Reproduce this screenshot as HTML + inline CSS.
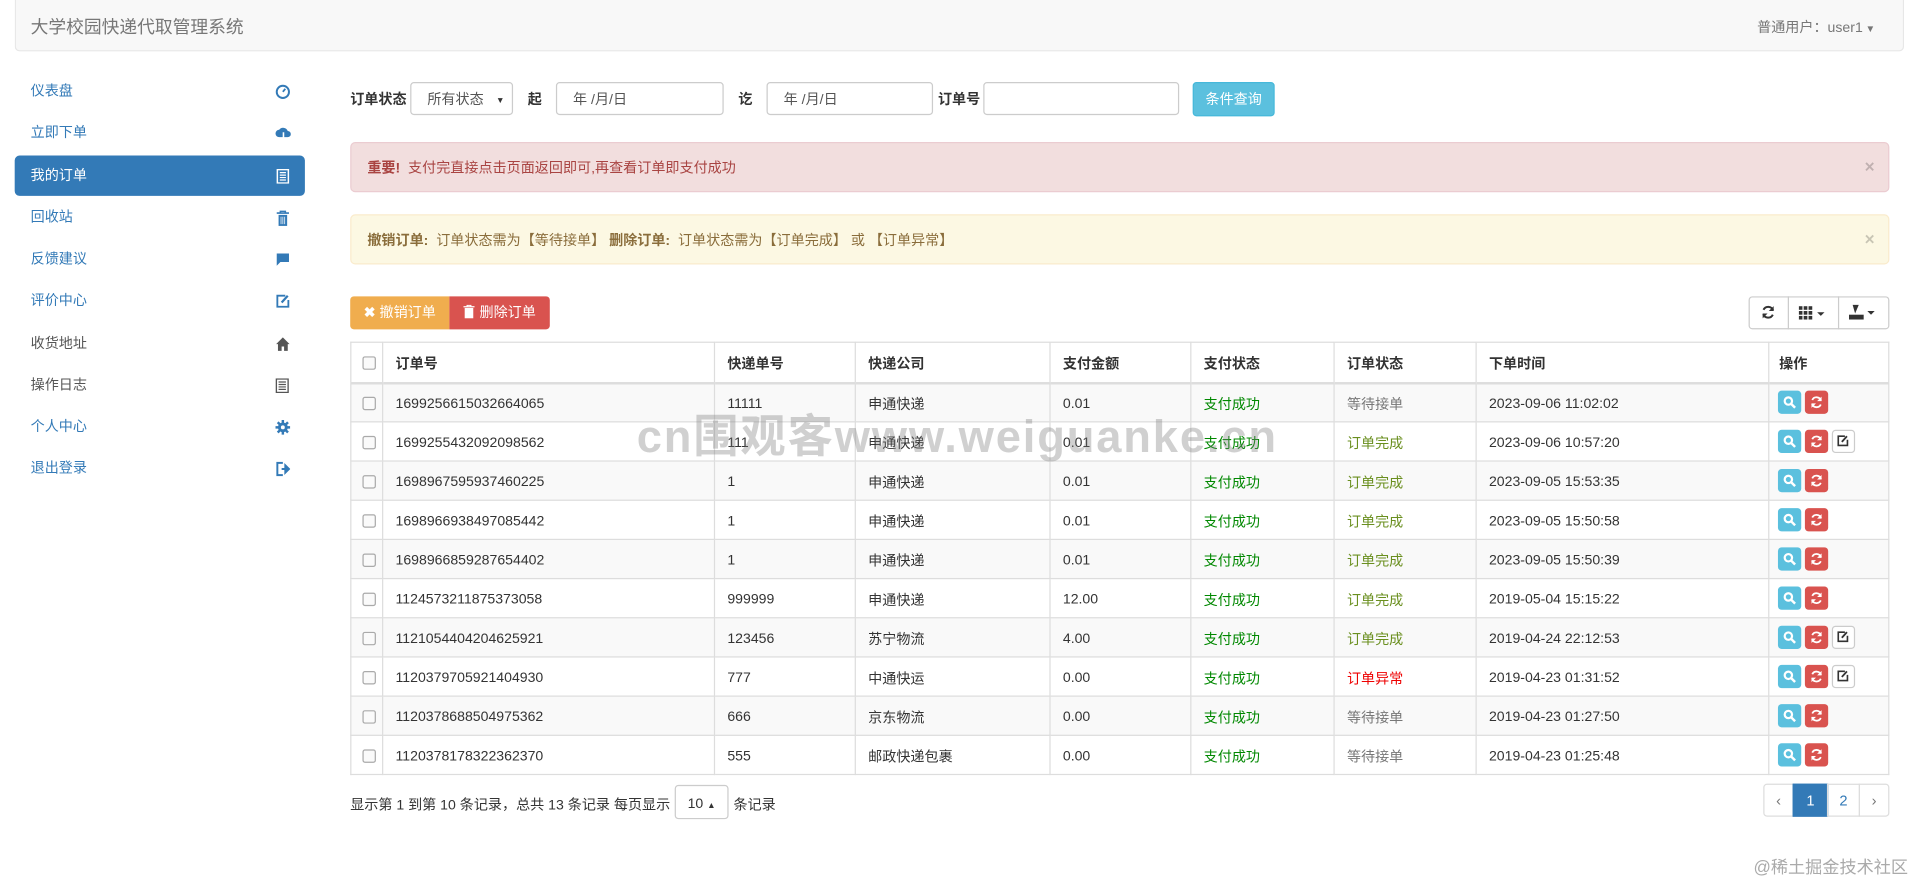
<!DOCTYPE html>
<html><head><meta charset="utf-8">
<style>
*{box-sizing:border-box;margin:0;padding:0}
html,body{width:1920px;height:883px;overflow:hidden;background:#fff}
body{font-family:"Liberation Sans","Noto Sans CJK SC",sans-serif;color:#333;font-size:11.5px}
#w{position:absolute;left:0;top:0;width:1568px;height:721px;transform:scale(1.22449);transform-origin:0 0}
.a{position:absolute}
.nav{left:12px;top:0;width:1543px;height:42px;background:#f8f8f8;border:1px solid #e7e7e7;border-top:none;border-radius:0 0 4px 4px}
.brand{left:25px;top:11px;font-size:14.5px;color:#777}
.user{left:1435px;top:14px;font-size:11.5px;color:#777}
.side{left:12px;width:237px;height:33px;border-radius:4px;color:#337ab7;font-size:11.5px;line-height:35px;padding-left:13px}
.side.act{background:#337ab7;color:#fff}
.side svg{position:absolute;left:213px;top:11px}
.inp{border:1px solid #ccc;border-radius:3px;height:27px;top:67px;background:#fff;font-size:11.5px;color:#555;line-height:29px;padding-left:13px}
.lbl{top:73px;font-weight:bold;font-size:11.5px}
.alert{left:286px;width:1257px;height:41px;border:1px solid;border-radius:4px;line-height:43px;padding-left:13px;font-size:11.5px}
.alert .x{position:absolute;right:11px;top:0;color:#000;opacity:.2;font-weight:bold;font-size:14px;line-height:39px}
.btn{height:27px;top:242px;color:#fff;line-height:29px;text-align:center;font-size:11.5px}
table{position:absolute;left:286px;top:279px;width:1257px;border-collapse:collapse;border:1px solid #ddd;font-size:11.5px}
td,th{border:1px solid #ddd;height:32px;padding:2px 0 0 10px;text-align:left;vertical-align:middle}
th{height:33px;font-weight:bold;border-bottom:2px solid #ddd}
tbody tr:nth-child(odd){background:#f9f9f9}
.cb{display:inline-block;width:11px;height:11px;border:1px solid #aaa;border-radius:2px;background:#fafafa;vertical-align:middle;margin-left:-1px}
.g{color:#080}.o{color:#6a8f1f}.gr{color:#777}.r{color:#e00}
.ib{display:inline-block;width:19px;height:19px;border-radius:3px;vertical-align:middle;margin-right:3px;position:relative}
.ib svg{position:absolute;left:4px;top:4px}
.s{background:#5bc0de}.d{background:#d9534f}.e{background:#fff;border:1px solid #ccc}
.pg{top:640px;height:27px;border:1px solid #ddd;line-height:27px;text-align:center;color:#337ab7;font-size:12px}
</style></head><body><div id="w">
<div class="a nav"></div>
<div class="a brand">大学校园快递代取管理系统</div>
<div class="a user">普通用户：user1<span style="font-size:8px"> ▼</span></div>

<div class="a side" style="top:58px">仪表盘<svg width="12" height="12" viewBox="0 0 12 12"><circle cx="6" cy="6" r="5" fill="none" stroke="#337ab7" stroke-width="1.6"/><path d="M6 6L8 3.5" stroke="#337ab7" stroke-width="1.5"/></svg></div>
<div class="a side" style="top:92px">立即下单<svg width="13" height="13" viewBox="0 0 13 13"><path d="M3 9a3 3 0 0 1 0-6 4 4 0 0 1 7 1 2.5 2.5 0 0 1 0 5z" fill="#337ab7"/><path d="M6.5 5v7M4.5 10l2 2 2-2" stroke="#fff" stroke-width="1.3" fill="none"/></svg></div>
<div class="a side act" style="top:127px">我的订单<svg width="12" height="12" viewBox="0 0 12 12"><rect x="1.5" y="0.5" width="9" height="11" fill="none" stroke="#fff" stroke-width="1.2"/><path d="M3.5 3h5M3.5 5h5M3.5 7h5M3.5 9h5" stroke="#fff"/></svg></div>
<div class="a side" style="top:161px">回收站<svg width="12" height="13" viewBox="0 0 12 13"><path d="M1 2h10M4 2V0.5h4V2" stroke="#337ab7" stroke-width="1.3" fill="none"/><rect x="2.5" y="3.5" width="7" height="9" fill="#337ab7"/><path d="M4.5 5v6M6 5v6M7.5 5v6" stroke="#fff" stroke-width=".6"/></svg></div>
<div class="a side" style="top:195px">反馈建议<svg width="12" height="12" viewBox="0 0 12 12"><path d="M1 1h10v7H4l-3 3z" fill="#337ab7"/></svg></div>
<div class="a side" style="top:229px">评价中心<svg width="12" height="12" viewBox="0 0 12 12"><path d="M8 1.5H1.5v9h9V5" fill="none" stroke="#337ab7" stroke-width="1.5"/><path d="M5 7l5-5.5" stroke="#337ab7" stroke-width="1.8"/></svg></div>
<div class="a side" style="top:264px;color:#555">收货地址<svg width="12" height="12" viewBox="0 0 12 12"><path d="M6 0.5L0.5 6H2v5.5h3V8h2v3.5h3V6h1.5z" fill="#555"/></svg></div>
<div class="a side" style="top:298px;color:#555">操作日志<svg width="11" height="12" viewBox="0 0 11 12"><rect x="0.7" y="0.5" width="9.6" height="11" fill="none" stroke="#555" stroke-width="1.1"/><path d="M2.5 3h6M2.5 5h6M2.5 7h6M2.5 9h6" stroke="#555"/></svg></div>
<div class="a side" style="top:332px">个人中心<svg width="12" height="12" viewBox="0 0 12 12"><circle cx="6" cy="6" r="4" fill="#337ab7"/><path d="M6 0v12M0 6h12M1.8 1.8l8.4 8.4M10.2 1.8l-8.4 8.4" stroke="#337ab7" stroke-width="2"/><circle cx="6" cy="6" r="1.6" fill="#fff"/></svg></div>
<div class="a side" style="top:366px">退出登录<svg width="12" height="12" viewBox="0 0 12 12"><path d="M6 1H1.5v10H6" fill="none" stroke="#337ab7" stroke-width="1.6"/><path d="M5 6h4M8 3l3 3-3 3z" stroke="#337ab7" stroke-width="1.6" fill="#337ab7"/></svg></div>

<div class="a lbl" style="left:286px">订单状态</div>
<div class="a inp" style="left:335px;width:84px">所有状态<span style="position:absolute;right:6px;font-size:7px;color:#333">▼</span></div>
<div class="a lbl" style="left:431px">起</div>
<div class="a inp" style="left:454px;width:137px">年 /月/日</div>
<div class="a lbl" style="left:603px">讫</div>
<div class="a inp" style="left:626px;width:136px">年 /月/日</div>
<div class="a lbl" style="left:766px">订单号</div>
<div class="a inp" style="left:803px;width:160px"></div>
<div class="a" style="left:974px;top:67px;width:67px;height:28px;background:#5bc0de;border:1px solid #46b8da;border-radius:3px;color:#fff;text-align:center;line-height:28px">条件查询</div>

<div class="a alert" style="top:116px;background:#f2dede;border-color:#ebccd1;color:#a94442"><b>重要!</b>&nbsp; 支付完直接点击页面返回即可,再查看订单即支付成功<span class="x">×</span></div>
<div class="a alert" style="top:175px;background:#fcf8e3;border-color:#faebcc;color:#8a6d3b"><b>撤销订单:</b>&nbsp; 订单状态需为【等待接单】 <b>删除订单:</b>&nbsp; 订单状态需为【订单完成】 或 【订单异常】<span class="x">×</span></div>

<div class="a btn" style="left:286px;width:81px;background:#f0ad4e;border-radius:3px 0 0 3px"><b>✖</b> 撤销订单</div>
<div class="a btn" style="left:367px;width:82px;background:#d9534f;border-radius:0 3px 3px 0"><svg width="10" height="11" viewBox="0 0 10 11" style="vertical-align:-1px"><path d="M0.5 1.5h9M3.5 1.5V0.3h3v1.2" stroke="#fff" fill="none"/><rect x="1.5" y="2.5" width="7" height="8.5" fill="#fff"/></svg> 删除订单</div>
<div class="a" style="left:1428px;top:242px;width:115px;height:27px;border:1px solid #ccc;border-radius:3px"></div>
<div class="a" style="left:1460px;top:242px;width:1px;height:27px;background:#ccc"></div>
<div class="a" style="left:1501px;top:242px;width:1px;height:27px;background:#ccc"></div>
<svg class="a" style="left:1438px;top:249px" width="12" height="12" viewBox="0 0 12 12"><path d="M10 4.5A4.2 4.2 0 0 0 2.2 4M2 7.5A4.2 4.2 0 0 0 9.8 8" fill="none" stroke="#333" stroke-width="1.6"/><path d="M10.5 1v4h-4zM1.5 11V7h4z" fill="#333"/></svg>
<svg class="a" style="left:1469px;top:250px" width="22" height="11" viewBox="0 0 22 11"><g fill="#333"><rect x="0" y="0" width="3" height="3"/><rect x="4" y="0" width="3" height="3"/><rect x="8" y="0" width="3" height="3"/><rect x="0" y="4" width="3" height="3"/><rect x="4" y="4" width="3" height="3"/><rect x="8" y="4" width="3" height="3"/><rect x="0" y="8" width="3" height="3"/><rect x="4" y="8" width="3" height="3"/><rect x="8" y="8" width="3" height="3"/><path d="M15 5h6l-3 3z"/></g></svg>
<svg class="a" style="left:1510px;top:248px" width="24" height="13" viewBox="0 0 24 13"><g fill="#333"><rect x="0" y="9" width="12" height="4"/><path d="M3 1h5L5 8z"/><path d="M15 6h6l-3 3z"/></g></svg>

<table>
<thead><tr><th style="width:26px"><span class="cb"></span></th><th style="width:271px">订单号</th><th style="width:115px">快递单号</th><th style="width:159px">快递公司</th><th style="width:115px">支付金额</th><th style="width:117px">支付状态</th><th style="width:116px">订单状态</th><th style="width:239px">下单时间</th><th style="padding-left:8px">操作</th></tr></thead>
<tbody>
<tr><td><span class="cb"></span></td><td>1699256615032664065</td><td>11111</td><td>申通快递</td><td>0.01</td><td class="g">支付成功</td><td class="gr">等待接单</td><td>2023-09-06 11:02:02</td><td style="padding-left:7px">S</td></tr>
<tr><td><span class="cb"></span></td><td>1699255432092098562</td><td>111</td><td>申通快递</td><td>0.01</td><td class="g">支付成功</td><td class="o">订单完成</td><td>2023-09-06 10:57:20</td><td style="padding-left:7px">SE</td></tr>
<tr><td><span class="cb"></span></td><td>1698967595937460225</td><td>1</td><td>申通快递</td><td>0.01</td><td class="g">支付成功</td><td class="o">订单完成</td><td>2023-09-05 15:53:35</td><td style="padding-left:7px">S</td></tr>
<tr><td><span class="cb"></span></td><td>1698966938497085442</td><td>1</td><td>申通快递</td><td>0.01</td><td class="g">支付成功</td><td class="o">订单完成</td><td>2023-09-05 15:50:58</td><td style="padding-left:7px">S</td></tr>
<tr><td><span class="cb"></span></td><td>1698966859287654402</td><td>1</td><td>申通快递</td><td>0.01</td><td class="g">支付成功</td><td class="o">订单完成</td><td>2023-09-05 15:50:39</td><td style="padding-left:7px">S</td></tr>
<tr><td><span class="cb"></span></td><td>1124573211875373058</td><td>999999</td><td>申通快递</td><td>12.00</td><td class="g">支付成功</td><td class="o">订单完成</td><td>2019-05-04 15:15:22</td><td style="padding-left:7px">S</td></tr>
<tr><td><span class="cb"></span></td><td>1121054404204625921</td><td>123456</td><td>苏宁物流</td><td>4.00</td><td class="g">支付成功</td><td class="o">订单完成</td><td>2019-04-24 22:12:53</td><td style="padding-left:7px">SE</td></tr>
<tr><td><span class="cb"></span></td><td>1120379705921404930</td><td>777</td><td>中通快运</td><td>0.00</td><td class="g">支付成功</td><td class="r">订单异常</td><td>2019-04-23 01:31:52</td><td style="padding-left:7px">SE</td></tr>
<tr><td><span class="cb"></span></td><td>1120378688504975362</td><td>666</td><td>京东物流</td><td>0.00</td><td class="g">支付成功</td><td class="gr">等待接单</td><td>2019-04-23 01:27:50</td><td style="padding-left:7px">S</td></tr>
<tr><td><span class="cb"></span></td><td>1120378178322362370</td><td>555</td><td>邮政快递包裹</td><td>0.00</td><td class="g">支付成功</td><td class="gr">等待接单</td><td>2019-04-23 01:25:48</td><td style="padding-left:7px">S</td></tr>
</tbody></table>

<div class="a" style="left:286px;top:649px">显示第 1 到第 10 条记录，总共 13 条记录 每页显示</div>
<div class="a" style="left:551px;top:641px;width:44px;height:28px;border:1px solid #ccc;border-radius:3px;line-height:30px;text-align:center">10 <span style="font-size:7px">▲</span></div>
<div class="a" style="left:599px;top:649px">条记录</div>
<div class="a pg" style="left:1440px;width:25px;border-radius:3px 0 0 3px;color:#777">‹</div>
<div class="a pg" style="left:1464px;width:29px;background:#337ab7;border-color:#337ab7;color:#fff">1</div>
<div class="a pg" style="left:1492px;width:27px">2</div>
<div class="a pg" style="left:1518px;width:25px;border-radius:0 3px 3px 0;color:#777">›</div>

<div class="a" style="left:520px;top:326px;font-size:37px;font-weight:bold;color:rgba(120,120,120,.35);letter-spacing:1.5px;white-space:nowrap">cn围观客www.weiguanke.cn</div>
<div class="a" style="left:1432px;top:698px;font-size:14px;color:#aaa">@稀土掘金技术社区</div>
</div>
<script>
document.querySelectorAll('td').forEach(function(td){
 var t=td.textContent;
 if(t==='S'||t==='SE'){
  var h='<span class="ib s"><svg width="11" height="11" viewBox="0 0 11 11"><circle cx="4.5" cy="4.5" r="3" fill="none" stroke="#fff" stroke-width="1.8"/><path d="M6.5 6.5l3.5 3.5" stroke="#fff" stroke-width="2"/></svg></span>'+
  '<span class="ib d"><svg width="11" height="11" viewBox="0 0 12 12"><path d="M10 4.5A4.2 4.2 0 0 0 2.2 4M2 7.5A4.2 4.2 0 0 0 9.8 8" fill="none" stroke="#fff" stroke-width="1.6"/><path d="M10.5 1v4h-4zM1.5 11V7h4z" fill="#fff"/></svg></span>';
  if(t==='SE')h+='<span class="ib e"><svg width="10" height="10" viewBox="0 0 12 12" style="left:3px;top:3px"><path d="M8 1.5H1.5v9h9V5" fill="none" stroke="#333" stroke-width="1.6"/><path d="M5 7l5-5.5" stroke="#333" stroke-width="1.8"/></svg></span>';
  td.innerHTML=h;td.style.paddingTop='0';
 }
});
</script>
</body></html>
